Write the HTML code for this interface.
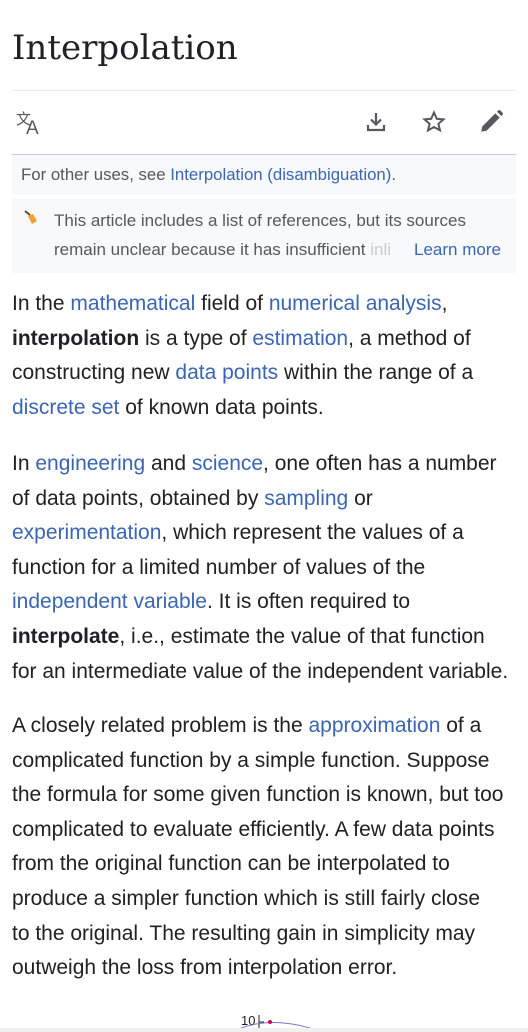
<!DOCTYPE html>
<html><head><meta charset="utf-8"><style>
*{margin:0;padding:0;box-sizing:border-box}
body{width:528px;height:1032px;overflow:hidden;background:#fff;font-family:"Liberation Sans",sans-serif;color:#202122;position:relative}
a{color:#3a65b3;text-decoration:none}
.t{position:absolute;left:12px;top:28px;font-family:"DejaVu Serif","Liberation Serif",serif;font-size:34px;color:#202122}
.hr{position:absolute;left:12px;right:12px;height:1px;background:#c8ccd1}
.hat{position:absolute;left:12px;right:12px;top:155px;height:40px;background:#f8f9fa;font-size:16.8px;color:#54595d;padding:10px 9px}
.note{position:absolute;left:12px;right:12px;top:199px;height:74px;background:#f8f9fa;font-size:17px;color:#54595d}
.note div{position:absolute;left:42px;white-space:nowrap}
.p{position:absolute;left:12px;font-size:21px;line-height:34.6px;white-space:nowrap}
.p div{height:34.6px}
</style></head><body>
<div class="t">Interpolation</div>
<div class="hr" style="top:90px;background:#eaecf0"></div>
<svg style="position:absolute;left:16px;top:109px" width="30" height="28" viewBox="0 0 30 28"><text x="0" y="15" font-size="15" font-family="Noto Sans CJK SC" fill="#54595d">文</text><text x="10" y="25" font-size="19" font-family="Liberation Sans" fill="#54595d">A</text></svg>
<svg style="position:absolute;left:364px;top:110px" width="24" height="24" viewBox="0 0 24 24"><path d="M12 3v11M7 9.5l5 5 5-5M4 15v5h16v-5" fill="none" stroke="#54595d" stroke-width="2.2"/></svg>
<svg style="position:absolute;left:421px;top:110px" width="26" height="24" viewBox="0 0 24 24"><path d="M12 2.5l2.8 6.3 6.7.6-5.1 4.4 1.6 6.6L12 17l-6 3.4 1.6-6.6-5.1-4.4 6.7-.6z" fill="none" stroke="#54595d" stroke-width="2"/></svg>
<svg style="position:absolute;left:478px;top:109px" width="26" height="26" viewBox="0 0 24 24"><path d="M3 21l1-5L16 4l4 4L8 20z M17.5 2.5l4 4 1-1c.7-.7.7-1.6 0-2.3l-1.7-1.7c-.7-.7-1.6-.7-2.3 0z" fill="#54595d"/></svg>
<div class="hr" style="top:154px"></div>
<div class="hat">For other uses, see <a>Interpolation (disambiguation)</a>.</div>
<div class="note">
<svg style="position:absolute;left:12px;top:11px" width="14" height="16" viewBox="0 0 14 16"><path d="M1 1l5 4" stroke="#6b4a1a" stroke-width="2"/><path d="M4 6l5-2 4 7-5 3z" fill="#f0a030"/></svg>
<div style="top:12px">This article includes a list of references, but its sources</div>
<div style="top:41px">remain unclear because it has insufficient <span style="color:#c8ccd1">inli</span></div>
<div style="top:41px;left:396px;color:#3a65b3;background:#f8f9fa;padding-left:6px">Learn more</div>
</div>
<div class="p" style="top:287px">
<div>In the <a>mathematical</a> field of <a>numerical analysis</a>,</div>
<div><b>interpolation</b> is a type of <a>estimation</a>, a method of</div>
<div>constructing new <a>data points</a> within the range of a</div>
<div><a>discrete set</a> of known data points.</div>
</div>
<div class="p" style="top:447px">
<div>In <a>engineering</a> and <a>science</a>, one often has a number</div>
<div>of data points, obtained by <a>sampling</a> or</div>
<div><a>experimentation</a>, which represent the values of a</div>
<div>function for a limited number of values of the</div>
<div><a>independent variable</a>. It is often required to</div>
<div><b>interpolate</b>, i.e., estimate the value of that function</div>
<div>for an intermediate value of the independent variable.</div>
</div>
<div class="p" style="top:709px">
<div>A closely related problem is the <a>approximation</a> of a</div>
<div>complicated function by a simple function. Suppose</div>
<div>the formula for some given function is known, but too</div>
<div>complicated to evaluate efficiently. A few data points</div>
<div>from the original function can be interpolated to</div>
<div>produce a simpler function which is still fairly close</div>
<div>to the original. The resulting gain in simplicity may</div>
<div>outweigh the loss from interpolation error.</div>
</div>
<svg style="position:absolute;left:220px;top:1008px" width="110" height="24" viewBox="0 0 110 24"><text x="21" y="17" font-size="13" font-family="Liberation Sans" fill="#202122">10</text><path d="M39 7v17M39 14h5" stroke="#202122" stroke-width="1"/><path d="M12 24Q50 5 102 24" fill="none" stroke="#7777cc" stroke-width="1"/><circle cx="50" cy="14" r="2" fill="#c0103a"/></svg>
<div style="position:absolute;left:0;right:0;top:1028px;height:4px;background:#f0f0f0"></div>
</body></html>
